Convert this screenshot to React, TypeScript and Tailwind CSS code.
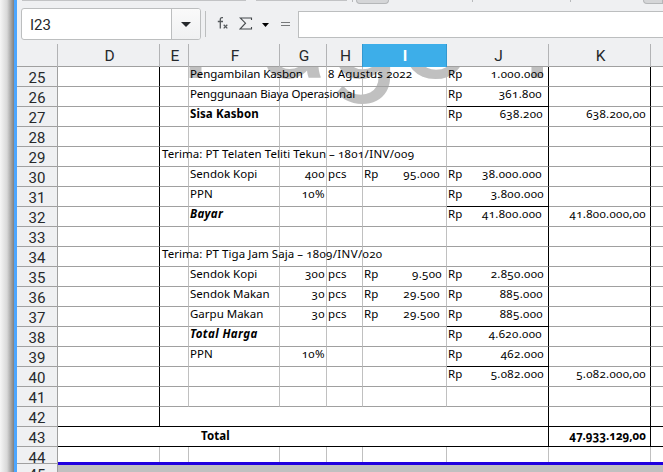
type Amount = { value: string; end: string };
type Row = {
  n: number;
  e?: [string, string];
  f?: string;
  fStyle?: string;
  g?: string;
  h?: string;
  i?: Amount;
  j?: Amount;
  k?: string;
  sum?: boolean;
};

const ROWS: Row[] = [
  { n: 25, f: "Pengambilan Kasbon", fStyle: "tracking-[-0.1px]", h: "8 Agustus 2022", j: { value: "1.000.000", end: "pr-[4px]" } },
  { n: 26, f: "Penggunaan Biaya Operasional", fStyle: "tracking-[-0.16px]", j: { value: "361.800", end: "pr-[6px]" }, sum: true },
  { n: 27, f: "Sisa Kasbon", fStyle: "font-bold tracking-[0.1px]", j: { value: "638.200", end: "pr-[5px]" }, k: "638.200,00" },
  { n: 28 },
  { n: 29, e: ["Terima: PT Telaten Teliti Tekun – ", "1801/INV/009"] },
  { n: 30, f: "Sendok Kopi", g: "400", h: "pcs", i: { value: "95.000", end: "pr-[6px]" }, j: { value: "38.000.000", end: "pr-[6px]" } },
  { n: 31, f: "PPN", g: "10%", j: { value: "3.800.000", end: "pr-[4px]" }, sum: true },
  { n: 32, f: "Bayar", fStyle: "font-bold italic tracking-[0.3px]", j: { value: "41.800.000", end: "pr-[6px]" }, k: "41.800.000,00" },
  { n: 33 },
  { n: 34, e: ["Terima: PT Tiga Jam Saja – ", "1809/INV/020"] },
  { n: 35, f: "Sendok Kopi", g: "300", h: "pcs", i: { value: "9.500", end: "pr-[4px]" }, j: { value: "2.850.000", end: "pr-[4px]" } },
  { n: 36, f: "Sendok Makan", g: "30", h: "pcs", i: { value: "29.500", end: "pr-[6px]" }, j: { value: "885.000", end: "pr-[5px]" } },
  { n: 37, f: "Garpu Makan", g: "30", h: "pcs", i: { value: "29.500", end: "pr-[6px]" }, j: { value: "885.000", end: "pr-[5px]" }, sum: true },
  { n: 38, f: "Total Harga", fStyle: "font-bold italic tracking-[0.4px]", j: { value: "4.620.000", end: "pr-[6px]" } },
  { n: 39, f: "PPN", g: "10%", j: { value: "462.000", end: "pr-[4px]" }, sum: true },
  { n: 40, j: { value: "5.082.000", end: "pr-[4px]" }, k: "5.082.000,00" },
  { n: 41 },
];

const COLS = "grid grid-cols-[41px_102px_29px_91px_47px_36px_84px_102px_102px_12px]";

function RowHead({ n, line = "h-5" }: { n: number; line?: string }) {
  return (
    <div className={`${line} overflow-hidden border-r border-b border-[#a0a0a0] bg-[#eff0f2] text-center font-[Roboto,sans-serif] text-[15px] leading-[22px] font-normal text-[#26292c] lining-nums`}>
      {n}
    </div>
  );
}

function Money({ amount }: { amount: Amount }) {
  return (
    <div className={`flex justify-between pl-[1px] ${amount.end}`}>
      <span>Rp</span>
      <span className="tracking-[0.35px]">{amount.value}</span>
    </div>
  );
}

function SheetRow({ row }: { row: Row }) {
  const cell = "h-5 whitespace-nowrap border-b border-b-[#a0a0a0] border-r";
  const grey = "border-r-[#c0c0c0]";
  return (
    <div className={COLS}>
      <RowHead n={row.n} />
      <div className={`${cell} border-r-black`} />
      <div className={`${cell} ${grey} pl-[2px]`}>
        {row.e && (
          <span className="relative z-10 tracking-[0.06px]">
            {row.e[0]}
            <span className="tracking-[0.35px]">{row.e[1]}</span>
          </span>
        )}
      </div>
      <div className={`${cell} ${grey} pl-[1px] ${row.fStyle ?? ""}`}>
        <span className="relative z-10">{row.f}</span>
      </div>
      <div className={`${cell} ${grey} flex justify-end pr-[1px] tracking-[0.4px]`}>{row.g}</div>
      <div className={`${cell} ${grey} pl-[1px] tracking-[0.22px]`}>
        <span className="relative z-10">{row.h}</span>
      </div>
      <div className={`${cell} ${grey}`}>{row.i && <Money amount={row.i} />}</div>
      <div className={`h-5 border-r border-b border-r-black whitespace-nowrap ${row.sum ? "border-b-black" : "border-b-[#a0a0a0]"}`}>
        {row.j && <Money amount={row.j} />}
      </div>
      <div className={`${cell} border-r-black pr-[4px] text-right tracking-[0.33px]`}>{row.k}</div>
      <div className="h-5 border-b border-[#a0a0a0]" />
    </div>
  );
}

function Toolbar() {
  return (
    <div className="h-[44px] overflow-hidden">
      <div className="flex h-[4px] items-start">
        <div className="ml-[5px] h-px w-[228px] bg-[#c2c3c5]" />
        <div className="ml-[10px] h-px w-[93px] bg-[#c2c3c5]" />
        <div className="ml-[5px] h-[2px] w-px bg-[#b8babc]" />
        <div className="ml-[3px] h-[4px] w-[34px] rounded-b-sm border border-t-0 border-[#b5b7b9] bg-[#d5d6d8]" />
        <div className="ml-[83px] h-[2px] w-px bg-[#b8babc]" />
        <div className="ml-[97px] h-[2px] w-px bg-[#b8babc]" />
        <div className="ml-[72px] h-[4px] w-[20px] rounded-bl-sm border border-t-0 border-[#b5b7b9] bg-[#d5d6d8]" />
      </div>
      <div className="flex h-[40px] items-start pt-[4px] pl-[4px]">
        <div className="flex h-[32px] w-[180px] overflow-hidden rounded-[3px] border border-[#bcbebf] bg-white">
          <div className="flex-1 pl-[8px] font-[Roboto,sans-serif] text-[15px] leading-[32px] text-[#26292c]">I23</div>
          <div className="flex w-[29px] items-center justify-center border-l border-[#bcbebf] bg-gradient-to-b from-[#fafafa] to-[#f0f1f2]">
            <svg width="10" height="5" viewBox="0 0 10 5" className="fill-[#26292c]">
              <path d="M0 0H10L5 5Z" />
            </svg>
          </div>
        </div>
        <div className="mt-[3px] ml-[4px] h-[26px] w-px bg-[#bcbebf]" />
        <svg className="mt-[7px] ml-[11px] text-[#55595c]" width="12" height="20" viewBox="0 0 12 20" fill="none" stroke="currentColor">
          <path d="M6 2.6H5Q3.3 2.6 3.3 4.5V13.5M.8 6.5H6" strokeWidth="1.3" />
          <path d="M6.7 9.8L10.3 13.4M10.3 9.8L6.7 13.4" strokeWidth="1.3" />
        </svg>
        <svg className="mt-[9px] ml-[10px]" width="14" height="13" viewBox="0 0 14 13" fill="none" stroke="#45494c">
          <path d="M12.5 3V1H1.2L6.5 6.2L1 12H12.5V10" strokeWidth="1.1" />
        </svg>
        <svg className="mt-[15px] ml-[9px] fill-black" width="7" height="4" viewBox="0 0 7 4">
          <path d="M0 0H7L3.5 4Z" />
        </svg>
        <svg className="mt-[14px] ml-[12px]" width="9" height="5" viewBox="0 0 9 5" fill="#77797b">
          <path d="M0 0H9V1H0ZM0 3H9V4H0Z" />
        </svg>
        <div className="mt-[3px] ml-[8px] h-[27px] flex-1 border border-r-0 border-[#bcbebf] bg-white" />
      </div>
    </div>
  );
}

function ColumnHeads() {
  const names = ["D", "E", "F", "G", "H", "I", "J", "K", ""];
  return (
    <div className={`${COLS} relative h-[23px] border-b border-[#a0a0a0] bg-[#eff0f2] text-center font-[Roboto,sans-serif] text-[15.5px] leading-[24px] text-[#26292c]`}>
      <div className="border-r border-[#b2b3b5]" />
      {names.map((name, index) => (
        <div
          key={index}
          className={
            name === "I"
              ? "-ml-px border-x border-[#3398d0] bg-[#3daee9] pl-[1px] font-bold text-white"
              : name === ""
                ? ""
                : "border-r border-[#b2b3b5] pl-[2px]"
          }
        >
          {name}
        </div>
      ))}
    </div>
  );
}

export default function App() {
  return (
    <div className="flex h-[472px] w-[663px] overflow-hidden bg-[#eff0f2]">
      <div className="w-[14px] shrink-0 bg-gradient-to-r from-[#f6f6f6] via-[#d8d8d8] to-[#808080]" />
      <div className="w-[3px] shrink-0 bg-[#4ca6ff]" />
      <div className="w-[646px] shrink-0">
        <Toolbar />
        <ColumnHeads />
        <div className="relative h-[405px] overflow-hidden bg-white font-['Noto_Sans',sans-serif] text-[11.5px] leading-[13px] text-black oldstyle-nums">
          <div className="absolute top-[-107px] left-[162px] font-[Roboto,sans-serif] text-[127px] leading-[150px] whitespace-nowrap text-[#c0c0c0] lining-nums">
            Page 1
          </div>
          <div className="relative">
            {ROWS.map((row) => (
              <SheetRow key={row.n} row={row} />
            ))}
            <div className="grid grid-cols-[41px_102px_389px_102px_12px]">
              <RowHead n={42} />
              <div className="border-r border-b border-black" />
              <div className="border-r border-b border-black" />
              <div className="border-r border-b border-black" />
              <div className="border-b border-black" />
            </div>
            <div className="grid grid-cols-[41px_491px_102px_12px] font-bold">
              <RowHead n={43} />
              <div className="border-r border-b border-black pt-[2px] pl-[143px] tracking-[0.1px]">Total</div>
              <div className="border-r border-b border-black pt-[2px] pr-[4px] text-right">47.933.129,00</div>
              <div className="border-b border-black" />
            </div>
            <div className="flex">
              <div className="w-[41px] shrink-0">
                <RowHead n={44} line="h-[17px]" />
                <RowHead n={45} line="h-[20px]" />
              </div>
              <div className="flex-1">
                <div className="grid h-[15px] grid-cols-[102px_29px_91px_47px_36px_84px_102px_102px_12px]">
                  {["D", "E", "F", "G", "H", "I", "J", "K"].map((c) => (
                    <div key={c} className="border-r border-[#c0c0c0]" />
                  ))}
                </div>
                <div className="h-[3px] bg-[#2000df]" />
                <div className="h-[20px] bg-[#c0c0c0]" />
              </div>
            </div>
          </div>
        </div>
      </div>
    </div>
  );
}
